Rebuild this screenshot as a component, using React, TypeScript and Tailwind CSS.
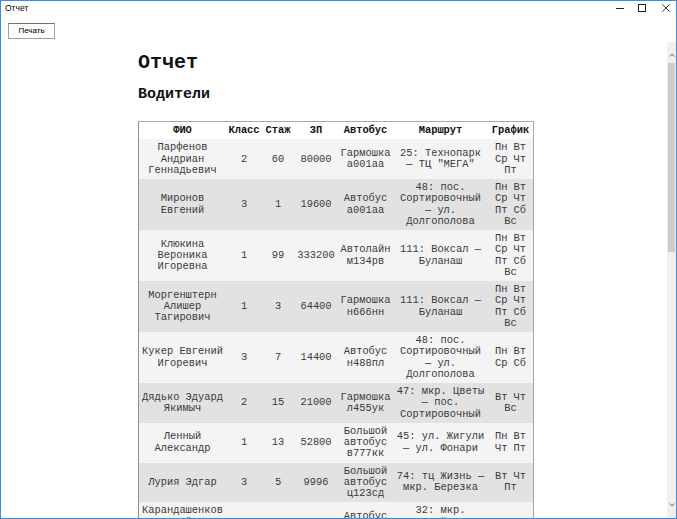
import React from "react";

type Row = { fio: string; cls: string; exp: string; pay: string; bus: string; route: string; sched: string };

const rows: Row[] = [
  { fio: "Парфенов Андриан Геннадьевич", cls: "2", exp: "60", pay: "80000", bus: "Гармошка а001аа", route: "25: Технопарк — ТЦ \"МЕГА\"", sched: "Пн Вт Ср Чт Пт" },
  { fio: "Миронов Евгений", cls: "3", exp: "1", pay: "19600", bus: "Автобус а001аа", route: "48: пос. Сортировочный — ул. Долгополова", sched: "Пн Вт Ср Чт Пт Сб Вс" },
  { fio: "Клюкина Вероника Игоревна", cls: "1", exp: "99", pay: "333200", bus: "Автолайн м134рв", route: "111: Воксал — Буланаш", sched: "Пн Вт Ср Чт Пт Сб Вс" },
  { fio: "Моргенштерн Алишер Тагирович", cls: "1", exp: "3", pay: "64400", bus: "Гармошка н666нн", route: "111: Воксал — Буланаш", sched: "Пн Вт Ср Чт Пт Сб Вс" },
  { fio: "Кукер Евгений Игоревич", cls: "3", exp: "7", pay: "14400", bus: "Автобус н488пл", route: "48: пос. Сортировочный — ул. Долгополова", sched: "Пн Вт Ср Сб" },
  { fio: "Дядько Эдуард Якимыч", cls: "2", exp: "15", pay: "21000", bus: "Гармошка л455ук", route: "47: мкр. Цветы — пос. Сортировочный", sched: "Вт Чт Вс" },
  { fio: "Ленный Александр", cls: "1", exp: "13", pay: "52800", bus: "Большой автобус в777кк", route: "45: ул. Жигули — ул. Фонари", sched: "Пн Вт Чт Пт" },
  { fio: "Лурия Эдгар", cls: "3", exp: "5", pay: "9996", bus: "Большой автобус ц123сд", route: "74: тц Жизнь — мкр. Березка", sched: "Вт Чт Пт" },
  { fio: "Карандашенков Семён Петрович", cls: "2", exp: "4", pay: "30400", bus: "Автобус о321ор", route: "32: мкр. Северный — ул. Ленина", sched: "Вт Ср" },
];

const mono = { fontFamily: '"Liberation Mono", "Courier New", monospace' };
const sans = { fontFamily: '"Liberation Sans", Arial, sans-serif' };

export default function App() {
  return (
    <div className="w-[677px] h-[519px] bg-white border border-[#3b8ddd] flex flex-col overflow-hidden">
      {/* title bar */}
      <div className="h-[22px] flex shrink-0">
        <div className="ml-[4px] pt-[2px] text-[8.5px] leading-[10px] text-black" style={sans}>Отчет</div>
        <div className="ml-auto flex pt-[3px] pr-[6px]">
          <svg width="8" height="8" viewBox="0 0 8 8" className="mr-[14px]">
            <line x1="0" y1="4.5" x2="8" y2="4.5" stroke="#222" strokeWidth="1" />
          </svg>
          <svg width="8" height="8" viewBox="0 0 8 8" className="mr-[16px]">
            <rect x="0.5" y="0.5" width="7" height="7" fill="none" stroke="#222" strokeWidth="1" />
          </svg>
          <svg width="8" height="8" viewBox="0 0 8 8">
            <line x1="0.3" y1="0.3" x2="7.7" y2="7.7" stroke="#222" strokeWidth="0.9" />
            <line x1="7.7" y1="0.3" x2="0.3" y2="7.7" stroke="#222" strokeWidth="0.9" />
          </svg>
        </div>
      </div>
      {/* toolbar */}
      <div className="h-[19px] pl-[7px] shrink-0">
        <button
          className="w-[47px] h-[16px] bg-[#fdfdfd] border border-[#a0a0a0] border-t-[#707070] text-[8px] leading-[12px] text-black flex items-center justify-center"
          style={sans}
        >
          Печать
        </button>
      </div>
      {/* browser area */}
      <div className="flex-1 flex min-h-0">
        <div className="flex-1 overflow-hidden pl-[137px] text-[#111]" style={mono}>
          <h1 className="mt-[9px] text-[20px] leading-[24px] font-bold">Отчет</h1>
          <h2 className="mt-[11px] text-[15px] leading-[18px] font-bold">Водители</h2>
          <table className="mt-[17px] w-[396px] table-fixed border-separate border-spacing-0 border border-[#a8a8a8] border-l-[#909090] text-[10.4px] leading-[11.25px]">
            <colgroup>
              <col className="w-[87px]" />
              <col className="w-[36px]" />
              <col className="w-[32px]" />
              <col className="w-[44px]" />
              <col className="w-[55px]" />
              <col className="w-[95px]" />
              <col className="w-[45px]" />
            </colgroup>
            <thead>
              <tr className="bg-white">
                {["ФИО", "Класс", "Стаж", "ЗП", "Автобус", "Маршрут", "График"].map((h) => (
                  <th key={h} className="px-[2px] py-[3px] font-bold text-center text-[#111]">{h}</th>
                ))}
              </tr>
            </thead>
            <tbody>
              {rows.map((r, i) => (
                <tr key={i} className={i % 2 === 0 ? "bg-[#f4f4f4]" : "bg-[#e2e2e2]"}>
                  {[r.fio, r.cls, r.exp, r.pay, r.bus, r.route, r.sched].map((c, j) => (
                    <td key={j} className="px-[2px] py-[3px] text-center align-middle text-[#3a3a3a]">{c}</td>
                  ))}
                </tr>
              ))}
            </tbody>
          </table>
        </div>
        {/* scrollbar */}
        <div className="w-[9px] bg-[#f0f0f0] flex flex-col shrink-0">
          <div className="h-[21px] flex justify-center items-end pb-[6px]">
            <svg width="6" height="4" viewBox="0 0 6 4">
              <polyline points="0.5,3.5 3,1 5.5,3.5" fill="none" stroke="#606060" strokeWidth="1" />
            </svg>
          </div>
          <div className="ml-[1px] w-[7px] h-[189px] bg-[#cdcdcd]" />
          <div className="flex-1" />
          <div className="h-[21px] flex justify-center items-start pt-[6px]">
            <svg width="6" height="4" viewBox="0 0 6 4">
              <polyline points="0.5,0.5 3,3 5.5,0.5" fill="none" stroke="#606060" strokeWidth="1" />
            </svg>
          </div>
        </div>
      </div>
    </div>
  );
}
